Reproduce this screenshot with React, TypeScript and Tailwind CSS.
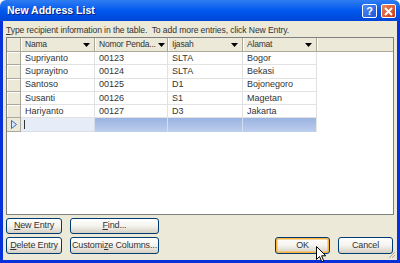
import React from "react"

const rows = [
  ["Supriyanto", "00123", "SLTA", "Bogor"],
  ["Suprayitno", "00124", "SLTA", "Bekasi"],
  ["Santoso", "00125", "D1", "Bojonegoro"],
  ["Susanti", "00126", "S1", "Magetan"],
  ["Hariyanto", "00127", "D3", "Jakarta"],
]

const cols = ["Nama", "Nomor Penda...", "Ijasah", "Alamat"]
const widths = ["w-[74px]", "w-[73px]", "w-[75px]", "w-[74px]"]

function Arrow() {
  return (
    <svg width="7" height="4" viewBox="0 0 7 4" className="shrink-0">
      <path d="M0 0h7L3.5 4z" fill="#000" />
    </svg>
  )
}

function XpButton({ children, className = "", hot = false }: { children: React.ReactNode; className?: string; hot?: boolean }) {
  return (
    <div
      className={`flex items-center justify-center whitespace-nowrap rounded-[3px] border border-[#003C74] bg-gradient-to-b from-white via-[#F4F3EE] to-[#D6D0C5] text-[9px] tracking-[-0.15px] text-[#333] ${hot ? "shadow-[inset_0_0_0_1.5px_#F8B33F]" : ""} ${className}`}
    >
      {children}
    </div>
  )
}

export default function App() {
  return (
    <div className="w-[400px] h-[263px] flex flex-col overflow-hidden relative" style={{ fontFamily: "'Liberation Sans', Arial, sans-serif" }}>
      {/* Title bar */}
      <div className="h-[21px] flex items-center justify-between pl-[7px] pr-[4px] bg-gradient-to-b from-[#2E7DF2] via-[#0058EE] to-[#0046D6] rounded-t-[6px]">
        <span className="text-white font-bold text-[10.5px] whitespace-nowrap [text-shadow:1px_1px_0_#0A1E7E]">New Address List</span>
        <div className="flex gap-[4px] mt-[1px]">
          <div className="w-[15px] h-[14px] rounded-[2px] border border-white bg-gradient-to-br from-[#4F8BF7] to-[#1F56D8] flex items-center justify-center text-white text-[11px] font-bold leading-none">?</div>
          <div className="w-[15px] h-[14px] rounded-[2px] border border-white bg-gradient-to-br from-[#E9845F] to-[#C93A10] flex items-center justify-center">
            <svg width="9" height="9" viewBox="0 0 9 9">
              <path d="M1 1L8 8M8 1L1 8" stroke="#fff" strokeWidth="2" />
            </svg>
          </div>
        </div>
      </div>

      {/* Body */}
      <div className="flex-1 bg-[#ECE9D8] border-x-[3px] border-b-[3px] border-[#0831D9] flex flex-col px-[3px]">
        <div className="h-[16px] flex items-center text-[8.6px] tracking-[-0.1px] text-[#333] pt-[2px] whitespace-nowrap">
          <span>
            <span className="underline">T</span>ype recipient information in the table.&nbsp; To add more entries, click New Entry.
          </span>
        </div>

        {/* Table */}
        <div className="h-[178px] border border-[#7F7F7F] bg-white flex flex-col">
          {/* Header */}
          <div className="h-[14px] flex bg-[#ECE9D8] text-[8.5px] text-[#333] whitespace-nowrap">
            <div className="w-[14px] border-r border-b border-[#ACA899]" />
            {cols.map((c, i) => (
              <div key={c} className={`${widths[i]} flex items-center justify-between gap-[2px] pl-[4px] pr-[4px] border-r border-b border-[#ACA899] shadow-[inset_1px_0_0_#fff]`}>
                <span className="tracking-[-0.2px]">{c}</span>
                <Arrow />
              </div>
            ))}
            <div className="flex-1 border-b border-[#ACA899] shadow-[inset_1px_0_0_#fff]" />
          </div>

          {/* Rows */}
          {rows.map((r) => (
            <div key={r[0]} className="h-[13.3px] flex text-[9px] text-[#333] whitespace-nowrap">
              <div className="w-[14px] bg-[#ECE9D8] border-r border-b border-[#ACA899] shadow-[inset_1px_1px_0_#fff]" />
              {r.map((v, i) => (
                <div key={i} className={`${widths[i]} flex items-center pl-[4px] border-r border-b border-[#E2E2E2] leading-none`}>
                  {v}
                </div>
              ))}
            </div>
          ))}

          {/* New row */}
          <div className="h-[13.3px] flex">
            <div className="w-[14px] bg-[#ECE9D8] border-r border-b border-[#ACA899] flex items-center justify-center">
              <svg width="6" height="9" viewBox="0 0 6 9">
                <path d="M0.5 0.5L5.5 4.5L0.5 8.5Z" fill="#DCE8FB" stroke="#3169C6" />
              </svg>
            </div>
            <div className="w-[74px] bg-[#E6EDF8] border-r border-b border-[#D6DEEC] flex items-center pl-[3px]">
              <div className="w-px h-[9px] bg-[#333]" />
            </div>
            <div className="w-[73px] bg-gradient-to-b from-[#9AB3E2] to-[#BDCEED] border-r border-[#D5DEF0]" />
            <div className="w-[75px] bg-gradient-to-b from-[#9AB3E2] to-[#BDCEED] border-r border-[#D5DEF0]" />
            <div className="w-[74px] bg-gradient-to-b from-[#9AB3E2] to-[#BDCEED] border-r border-[#E6E6E6]" />
          </div>
        </div>

        {/* Buttons */}
        <div className="flex mt-[3px]">
          <div className="flex flex-col gap-[3px]">
            <div className="flex gap-[8px]">
              <XpButton className="w-[56px] h-[16px]">
                <span><span className="underline">N</span>ew Entry</span>
              </XpButton>
              <XpButton className="w-[89px] h-[16px]">
                <span><span className="underline">F</span>ind...</span>
              </XpButton>
            </div>
            <div className="flex gap-[8px]">
              <XpButton className="w-[56px] h-[17px]">
                <span><span className="underline">D</span>elete Entry</span>
              </XpButton>
              <XpButton className="w-[89px] h-[17px]">
                <span>Customi<span className="underline">z</span>e Columns...</span>
              </XpButton>
            </div>
          </div>
          <div className="flex-1 flex items-end justify-end gap-[8px] pr-[1px]">
            <XpButton className="w-[55px] h-[17px]" hot>
              <span>OK</span>
            </XpButton>
            <XpButton className="w-[55px] h-[17px]">
              <span>Cancel</span>
            </XpButton>
          </div>
        </div>
      </div>

      {/* resize grip */}
      <svg width="8" height="8" viewBox="0 0 8 8" className="absolute right-[4px] bottom-[4px]">
        <path d="M7 1L1 7M7 4L4 7" stroke="#ACA899" strokeWidth="1" />
      </svg>

      {/* mouse cursor */}
      <svg width="11" height="17" viewBox="0 0 11 17" className="absolute left-[316px] top-[246px]">
        <path d="M0.5 0.5V13.5L3.5 10.5L5.8 15.8L7.8 15L5.6 9.8H9.8Z" fill="#fff" stroke="#000" strokeWidth="1" strokeLinejoin="round" />
      </svg>
    </div>
  )
}
